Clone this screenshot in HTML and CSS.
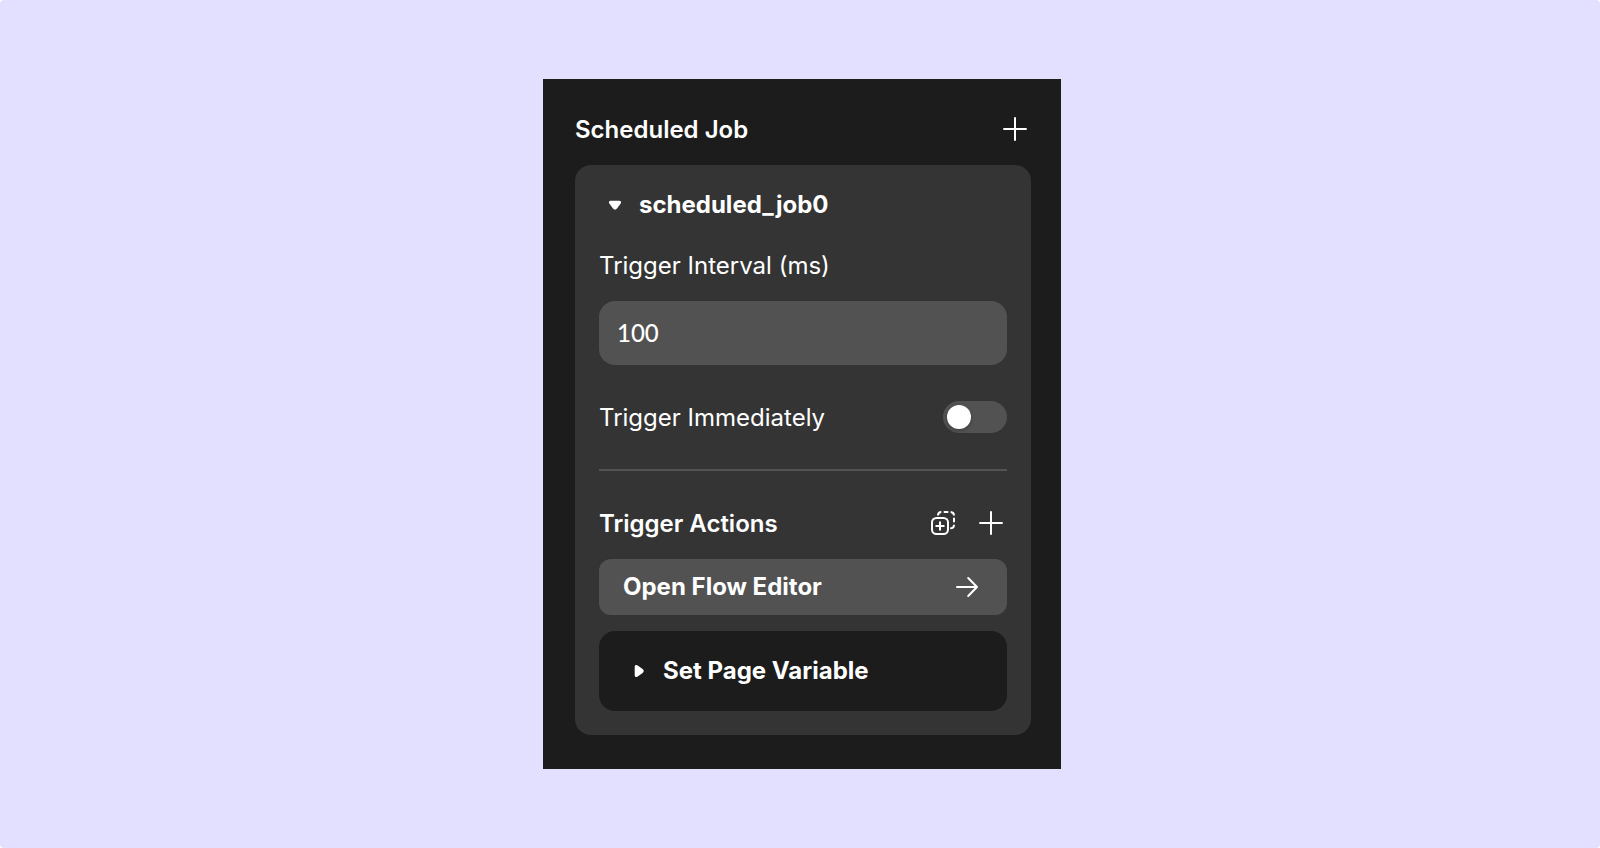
FILE: index.html
```html
<!DOCTYPE html>
<html lang="en">
<head>
<meta charset="utf-8">
<meta name="viewport" content="width=device-width, initial-scale=1">
<title>Scheduled Job</title>
<link rel="stylesheet" href="styles.css">
</head>
<body>
<main class="stage">
  <section class="panel">
    <header class="panel-header">
      <h1 class="heading">Scheduled Job</h1>
      <button class="icon-button" type="button" aria-label="Add scheduled job">
        <svg class="icon" viewBox="0 0 24 24" aria-hidden="true"><path d="M12 .3v23.400M.3 12h23.400"/></svg>
      </button>
    </header>
    <div class="card">
      <button class="disclosure" type="button" aria-expanded="true">
        <svg class="caret" viewBox="0 0 16 16" aria-hidden="true"><path d="M3.800 3.700h8.400c1.900 0 2.400 1.700 1.300 3L10 11.600c-1.200 1.500-2.800 1.500-4 0L2.500 6.700C1.400 5.400 1.900 3.700 3.800 3.700z"/></svg>
        scheduled_job0
      </button>
      <label class="label interval-label" for="interval">Trigger Interval (ms)</label>
      <input class="field" id="interval" type="text" inputmode="numeric" value="100">
      <div class="row switch-row">
        <label class="label" for="immediate">Trigger Immediately</label>
        <input class="switch" id="immediate" type="checkbox" role="switch">
      </div>
      <hr class="divider">
      <div class="row actions-header">
        <h2 class="heading">Trigger Actions</h2>
        <div class="tools">
          <button class="icon-button" type="button" aria-label="Add action group">
            <svg class="icon" viewBox="0 0 24 24" aria-hidden="true">
              <rect x="1" y="7" width="16" height="16" rx="4.500"/>
              <path d="M9 10.500v9M4.500 15h9"/>
              <path d="M7 4.500C7 2.300 8.200 1 10.300 1M12.700 1h4.600M19.600 1c2.300.2 3.400 1.400 3.400 3.500M23 6.800v4.500M23 13.700c0 2.200-1.200 3.600-3.800 3.600"/>
            </svg>
          </button>
          <button class="icon-button" type="button" aria-label="Add action">
            <svg class="icon" viewBox="0 0 24 24" aria-hidden="true"><path d="M12 .3v23.400M.3 12h23.400"/></svg>
          </button>
        </div>
      </div>
      <button class="flow-button" type="button">
        Open Flow Editor
        <svg class="icon" viewBox="0 0 24 24" aria-hidden="true"><path d="M2 12h20M13.200 3L22 12l-8.800 9" stroke-linecap="round" stroke-linejoin="round"/></svg>
      </button>
      <button class="disclosure action-item" type="button" aria-expanded="false">
        <svg class="caret" viewBox="0 0 16 16" aria-hidden="true"><path d="M3.700 3.800v8.400c0 1.900 1.700 2.400 3 1.300L11.600 10c1.500-1.200 1.500-2.800 0-4L6.700 2.500C5.400 1.400 3.700 1.900 3.700 3.800z"/></svg>
        Set Page Variable
      </button>
    </div>
  </section>
</main>
</body>
</html>
```
FILE: styles.css
```css
*,
*::before {
  box-sizing: border-box;
}

html {
  background: #fff;
}

body {
  margin: 0;
  color: #fff;
  font: 400 24px/32px Inter, "Liberation Sans", sans-serif;
}

button,
input {
  margin: 0;
  border: 0;
  color: inherit;
  font: inherit;
}

button {
  padding: 0;
  background: none;
  cursor: pointer;
}

.stage {
  display: flex;
  align-items: center;
  justify-content: center;
  min-height: 100vh;
  padding: 24px 0 24px 4px;
  border-radius: 4px;
  background: #e2dfff;
}

.panel {
  width: 100%;
  max-width: 518px;
  padding: 30px 30px 34px 32px;
  background: #1c1c1c;
}

.panel-header,
.row {
  display: flex;
  align-items: center;
  justify-content: space-between;
}

.panel-header {
  height: 40px;
  margin-bottom: 16px;
  padding-right: 4px;
}

.heading {
  margin: 0;
  padding-top: 2px;
  font-size: 24px;
  font-weight: 600;
  line-height: 30px;
}

.icon-button {
  display: flex;
}

.icon {
  display: block;
  width: 24px;
  height: 24px;
  fill: none;
  stroke: #fff;
  stroke-width: 2;
}

.card {
  display: flex;
  flex-direction: column;
  padding: 24px;
  border-radius: 16px;
  background: #343434;
}

.disclosure {
  display: flex;
  align-items: center;
  gap: 16px;
  padding-left: 8px;
  font-weight: 700;
  text-align: left;
}

.caret {
  width: 16px;
  height: 16px;
  fill: #fff;
}

.label {
  padding-top: 2px;
  line-height: 30px;
}

.interval-label {
  margin: 28px 0 20px;
}

.field {
  width: 100%;
  height: 64px;
  padding: 0 18px 2px;
  border-radius: 16px;
  background: #525252;
  font-family: Lato, "Open Sans", sans-serif;
  font-weight: 500;
}

.switch-row {
  margin: 36px 0;
}

.switch {
  display: flex;
  align-items: center;
  width: 64px;
  height: 32px;
  padding: 4px;
  border-radius: 16px;
  appearance: none;
  background: #525252;
  cursor: pointer;
}

.switch::before {
  width: 24px;
  height: 24px;
  border-radius: 50%;
  background: #fff;
  box-shadow: 0 2px 4px rgba(0, 0, 0, 0.2);
  content: "";
}

.switch:checked {
  justify-content: flex-end;
}

.divider {
  width: 100%;
  height: 2px;
  margin: 0;
  border: 0;
  background: #525252;
}

.actions-header {
  margin: 36px 0 20px;
  padding-right: 4px;
}

.tools {
  display: flex;
  gap: 24px;
}

.flow-button {
  display: flex;
  align-items: center;
  justify-content: space-between;
  height: 56px;
  padding: 0 28px 0 24px;
  border-radius: 12px;
  background: #525252;
  font-weight: 700;
}

.action-item {
  height: 80px;
  margin-top: 16px;
  padding-left: 32px;
  border-radius: 16px;
  background: #1c1c1c;
}
```
